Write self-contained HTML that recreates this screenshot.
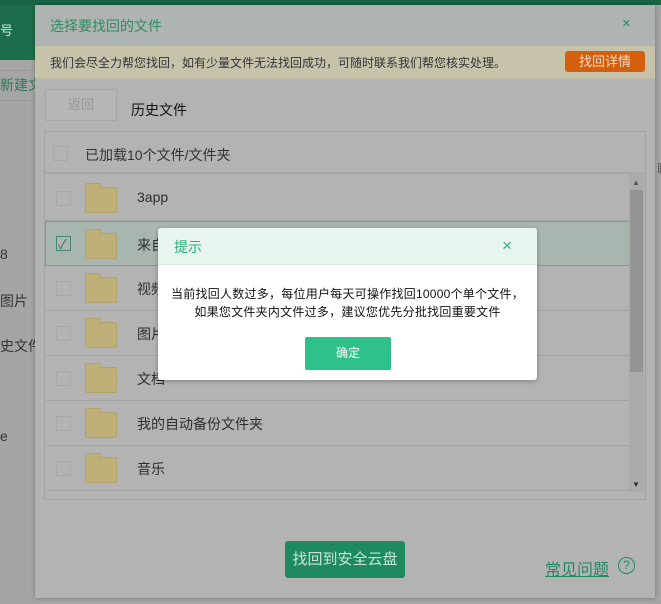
<!DOCTYPE html><html><head><meta charset="utf-8"><style>
*{margin:0;padding:0;box-sizing:border-box}
body{width:661px;height:604px;overflow:hidden;background:#a5a5a5;position:relative;font-family:"Liberation Sans","Noto Sans CJK SC",sans-serif;font-size:13px;color:#333}
.a{position:absolute}
.row{position:absolute;left:46px;width:583px;height:45px;border-bottom:1px solid #a3a3a3}
.cb{position:absolute;left:10px;top:15px;width:15px;height:15px;border:1px solid #a8a8a8;background:#b3b3b3}
.fd{position:absolute;left:39px;top:11px;width:32px;height:26px;background:#bfb07a;border:1px solid #b3a36a;border-radius:2px}
.fd:before{content:"";position:absolute;left:-1px;top:-5px;width:14px;height:5px;background:#bfb07a;border:1px solid #b3a36a;border-bottom:none;border-radius:2px 2px 0 0}
.nm{position:absolute;left:91px;top:13px;font-size:14px;color:#2e2e2e}
.lt{position:absolute;left:0;font-size:14px;color:#333}
</style></head><body>
<div class="a" style="left:0;top:0;width:661px;height:5px;background:#1a6446"></div>
<div class="a" style="left:0;top:5px;width:40px;height:55px;background:#1d6d4c"></div>
<div class="a" style="left:0;top:20px;font-size:13px;color:#cfe5d9">号</div>
<div class="a" style="left:0;top:70px;width:40px;height:31px;border-top:1px solid #999;border-bottom:1px solid #999"></div>
<div class="a" style="left:0;top:75px;font-size:14px;color:#2b7a55">新建文</div>
<div class="lt" style="top:246px">8</div>
<div class="lt" style="top:291px">图片</div>
<div class="lt" style="top:336px">史文件</div>
<div class="lt" style="top:428px">e</div>
<div class="a" style="left:35px;top:5px;width:620px;height:593px;background:#b3b3b3;box-shadow:0 0 4px rgba(0,0,0,.3)"></div>
<div class="a" style="left:35px;top:5px;width:620px;height:41px;background:#adb4b1;border-bottom:1px solid #9fb3b9"></div>
<div class="a" style="left:50px;top:16px;font-size:14px;color:#2f8b63">选择要找回的文件</div>
<div class="a" style="left:622px;top:15px;font-size:15px;color:#2f8b63">×</div>
<div class="a" style="left:35px;top:46px;width:620px;height:33px;background:#c7c3ab;border-bottom:1px solid #bbb69c"></div>
<div class="a" style="left:50px;top:54px;font-size:12px;color:#333">我们会尽全力帮您找回，如有少量文件无法找回成功，可随时联系我们帮您核实处理。</div>
<div class="a" style="left:565px;top:51px;width:80px;height:21px;background:#d4600d;border-radius:3px;color:#f0dccd;font-size:13px;text-align:center;line-height:21px">找回详情</div>
<div class="a" style="left:45px;top:89px;width:72px;height:32px;border:1px solid #a6a6a6;background:#b6b6b6;color:#999;text-align:center;line-height:30px;font-size:13px;border-radius:2px">返回</div>
<div class="a" style="left:131px;top:100px;font-size:14px;color:#111">历史文件</div>
<div class="a" style="left:44px;top:131px;width:602px;height:369px;border:1px solid #a3a3a3"></div>
<div class="a" style="left:45px;top:132px;width:600px;height:42px;border-bottom:2px solid #a8a8a8"></div>
<div class="a" style="left:53px;top:146px;width:15px;height:15px;border:1px solid #a8a8a8"></div>
<div class="a" style="left:85px;top:145px;font-size:14px;color:#333">已加载10个文件/文件夹</div>
<div class="row" style="top:176px"><div class="cb"></div><div class="fd"></div><div class="nm">3app</div></div>
<div class="row" style="top:221px;background:#a9b6af;border:1px solid #6fa68b;left:45px;width:585px"><div class="cb" style="border-color:#3f8a67;left:10px;top:14px"><span style="position:absolute;left:1px;top:-3px;color:#2f7d5a;font-size:13px">✓</span></div><div class="fd"></div><div class="nm">来自</div></div>
<div class="row" style="top:266px"><div class="cb"></div><div class="fd"></div><div class="nm">视频</div></div>
<div class="row" style="top:311px"><div class="cb"></div><div class="fd"></div><div class="nm">图片</div></div>
<div class="row" style="top:356px"><div class="cb"></div><div class="fd"></div><div class="nm">文档</div></div>
<div class="row" style="top:401px"><div class="cb"></div><div class="fd"></div><div class="nm">我的自动备份文件夹</div></div>
<div class="row" style="top:446px"><div class="cb"></div><div class="fd"></div><div class="nm">音乐</div></div>
<div class="a" style="left:629px;top:174px;width:15px;height:318px;background:#ababab"></div>
<div class="a" style="left:630px;top:190px;width:13px;height:182px;background:#959595"></div>
<div class="a" style="left:632px;top:178px;font-size:8px;color:#555">▲</div>
<div class="a" style="left:632px;top:480px;font-size:8px;color:#333">▼</div>
<div class="a" style="left:285px;top:541px;width:120px;height:37px;background:#1e8a60;border-radius:3px;color:#c9e6d8;font-size:15px;text-align:center;line-height:37px">找回到安全云盘</div>
<div class="a" style="left:545px;top:556px;font-size:16px;color:#1f8a60;text-decoration:underline">常见问题</div>
<div class="a" style="left:618px;top:557px;width:17px;height:17px;border:1.5px solid #1f8a60;border-radius:50%;color:#1f8a60;font-size:12px;text-align:center;line-height:14px">?</div>
<div class="a" style="left:657px;top:160px;font-size:12px;color:#555">聊</div>
<div class="a" style="left:158px;top:228px;width:379px;height:152px;background:#fff;border-radius:3px;box-shadow:0 1px 5px rgba(0,0,0,.3);overflow:hidden">
<div style="height:37px;background:#e8f5ef;border-bottom:1px solid #d5eadf"></div>
<div class="a" style="left:16px;top:9px;font-size:14px;color:#2cae78">提示</div>
<div class="a" style="left:344px;top:8px;font-size:17px;color:#2cae78">×</div>
<div class="a" style="left:0;width:379px;top:57px;text-align:center;font-size:12px;letter-spacing:0.25px;line-height:18px;color:#111">当前找回人数过多，每位用户每天可操作找回10000个单个文件，<br>如果您文件夹内文件过多，建议您优先分批找回重要文件</div>
<div class="a" style="left:147px;top:109px;width:86px;height:33px;background:#2ec28a;border-radius:2px;color:#fff;text-align:center;line-height:33px;font-size:12px">确定</div>
</div>
</body></html>
